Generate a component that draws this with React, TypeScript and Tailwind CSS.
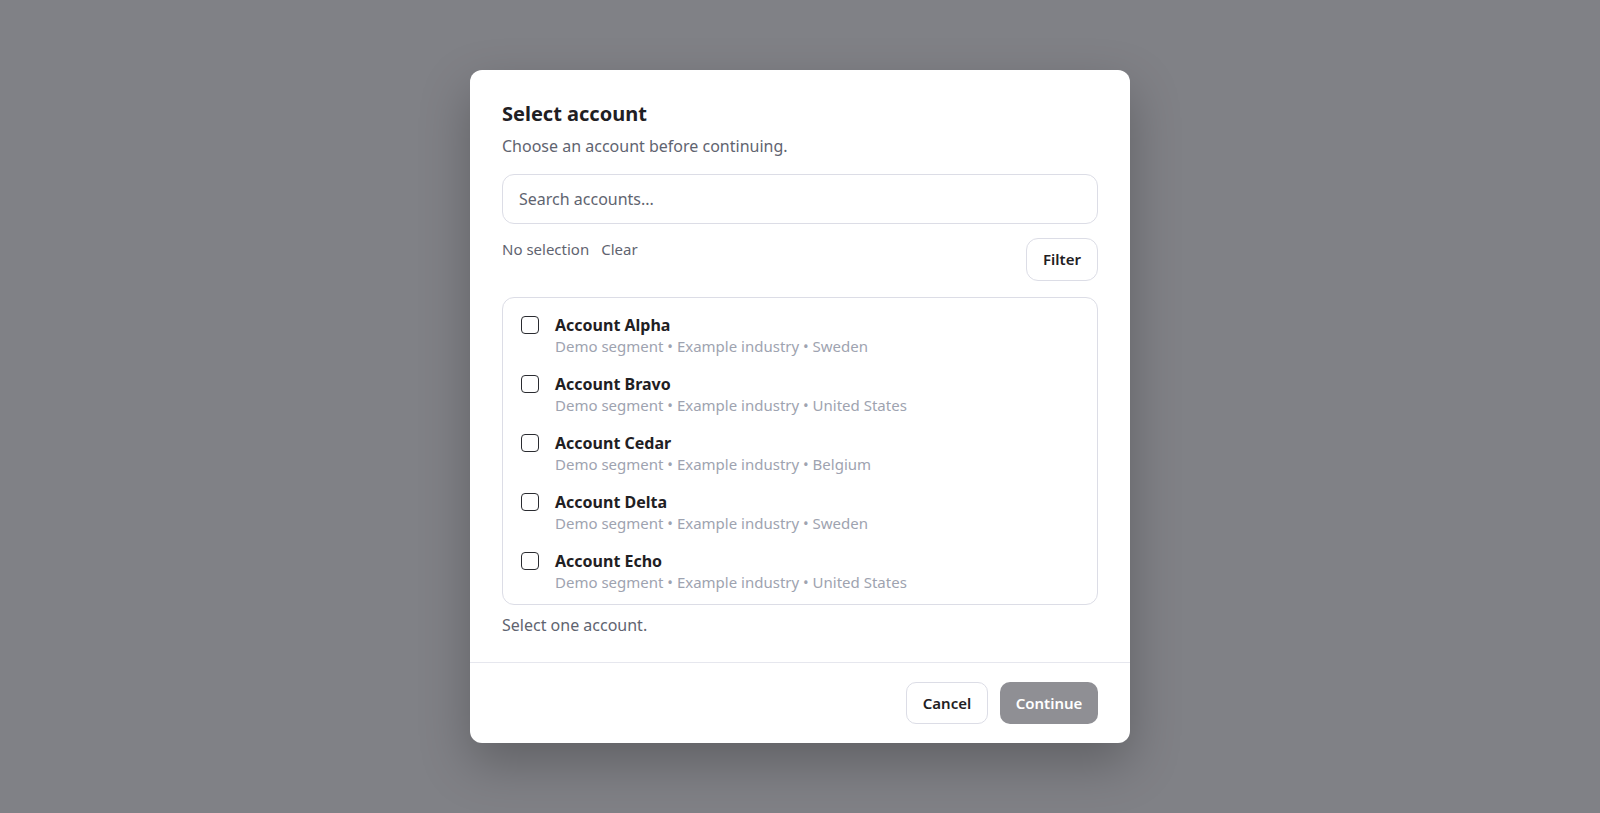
import React from "react";

const accounts = [
  { name: "Account Alpha", country: "Sweden" },
  { name: "Account Bravo", country: "United States" },
  { name: "Account Cedar", country: "Belgium" },
  { name: "Account Delta", country: "Sweden" },
  { name: "Account Echo", country: "United States" },
];

export default function App() {
  return (
    <div
      className="min-h-screen w-full bg-[#808186] flex items-center justify-center"
      style={{ fontFamily: '"Noto Sans", "Open Sans", sans-serif' }}
    >
      <div className="w-[660px] bg-white rounded-[12px] shadow-[0_20px_50px_rgba(0,0,0,0.25)] flex flex-col">
        <div className="px-8 pt-8 pb-[25px] flex flex-col">
          <h2 className="text-[20px] leading-[23px] font-bold text-[#1f2023]">Select account</h2>
          <p className="mt-[9px] text-base leading-6 text-[#5f6470]">Choose an account before continuing.</p>
          <div className="mt-4 h-[50px] rounded-[12px] border border-[#dcdde6] flex items-center px-4">
            <span className="text-base text-[#5f6470]">Search accounts...</span>
          </div>
          <div className="mt-[14px] flex items-start justify-between">
            <div className="flex items-center gap-3 text-[15px] leading-[23px] text-[#5f6470]">
              <span>No selection</span>
              <span>Clear</span>
            </div>
            <button className="h-[43px] w-[72px] rounded-[12px] border border-[#dcdde6] bg-white text-[15px] font-semibold text-[#1f2023]">
              Filter
            </button>
          </div>
          <div className="mt-4 rounded-[12px] border border-[#dcdde6] pt-[15px] pb-[12px] pl-[18px] pr-4 flex flex-col gap-[16px]">
            {accounts.map((a) => (
              <div key={a.name} className="flex items-start gap-4">
                <div className="mt-[3px] w-[18px] h-[18px] rounded-[4px] border-[1.5px] border-[#2a2b30] bg-white shrink-0" />
                <div className="flex flex-col">
                  <span className="text-base leading-6 font-bold text-[#1f2023]">{a.name}</span>
                  <span className="text-[15px] leading-[19px] text-[#9ea3b0]">
                    Demo segment • Example industry • {a.country}
                  </span>
                </div>
              </div>
            ))}
          </div>
          <p className="mt-2 text-base leading-6 text-[#5f6470]">Select one account.</p>
        </div>
        <div className="border-t border-[#e6e7ee] px-8 py-[19px] flex justify-end gap-3">
          <button className="h-[42px] w-[82px] rounded-[10px] border border-[#dcdde6] bg-white text-[15px] font-semibold text-[#1f2023]">
            Cancel
          </button>
          <button className="h-[42px] w-[98px] rounded-[10px] bg-[#8f8f94] text-[15px] font-semibold text-white">
            Continue
          </button>
        </div>
      </div>
    </div>
  );
}
